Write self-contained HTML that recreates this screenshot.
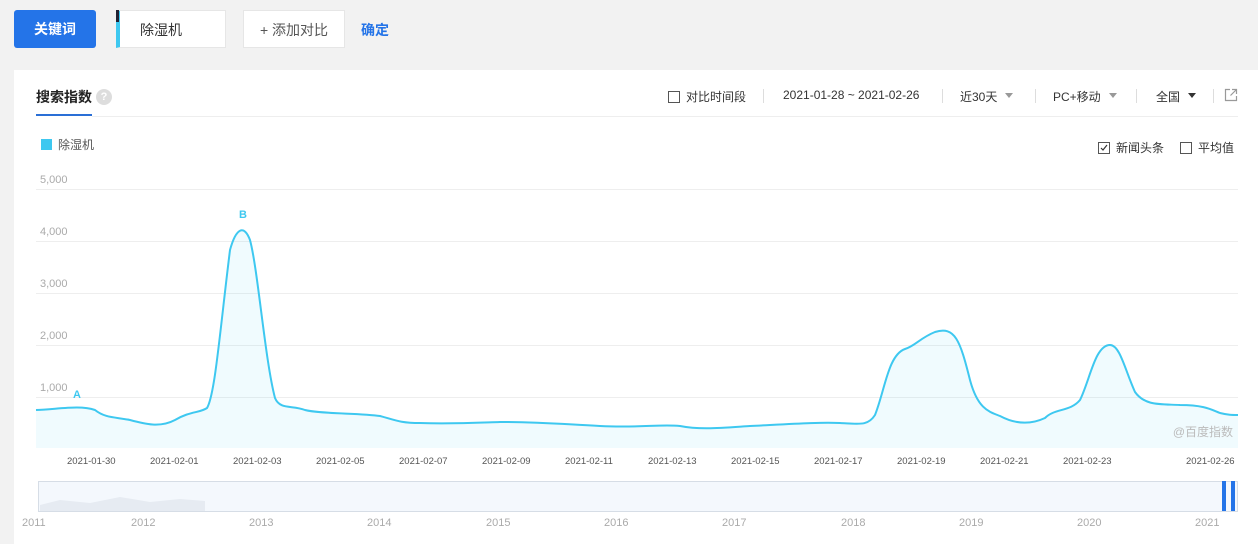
<!DOCTYPE html>
<html><head><meta charset="utf-8"><style>
body{margin:0;width:1258px;height:544px;background:#f2f2f2;font-family:"Liberation Sans","Noto Sans CJK SC",sans-serif;position:relative;overflow:hidden;color:#333}
.a{position:absolute}
.btn{top:10px;height:38px;box-sizing:border-box;font-size:14px;line-height:38px;text-align:center}
.card{left:14px;top:70px;width:1244px;height:474px;background:#fff}
.tb{font-size:12px;color:#333;top:88px}
.sep{width:1px;height:14px;background:#ddd;top:89px}
.tri{display:inline-block;border:4px solid transparent;border-top:5px solid #999;margin-left:8px;vertical-align:-1px}
.tri2{border-top-color:#333}
.cb{display:inline-block;width:10px;height:10px;border:1px solid #555;vertical-align:-2px;margin-right:6px}
.yl{font-size:11px;color:#aaa;left:40px}
.grid{left:36px;width:1202px;height:1px;background:#eee}
.xl{font-size:9.5px;color:#555;top:456px}
.yr{font-size:11px;color:#aaa;top:517px}
</style></head><body>
<div class="a btn" style="left:14px;width:82px;background:#2474e8;color:#fff;border-radius:3px;font-weight:bold">关键词</div>
<div class="a btn" style="left:116px;width:110px;background:#fff;border:1px solid #e6e6e6;border-left:4px solid #3ec8f0;text-align:left;padding-left:20px">除湿机</div>
<div class="a" style="left:116px;top:10px;width:3px;height:12px;background:#223"></div>
<div class="a btn" style="left:243px;width:102px;background:#fff;border:1px solid #e6e6e6;color:#555">+ 添加对比</div>
<div class="a" style="left:361px;top:20px;font-size:14px;color:#2474e8;font-weight:bold">确定</div>
<div class="a card"></div>
<div class="a" style="left:36px;top:87px;font-size:14px;font-weight:bold;color:#222">搜索指数</div>
<div class="a" style="left:96px;top:89px;width:16px;height:16px;border-radius:50%;background:#ddd;color:#fff;font-size:11px;text-align:center;line-height:16px;font-weight:bold">?</div>
<div class="a" style="left:36px;top:114px;width:56px;height:2px;background:#2a6fd6"></div>
<div class="a" style="left:92px;top:116px;width:1146px;height:1px;background:#eee"></div>
<div class="a tb" style="left:668px"><span class="cb"></span>对比时间段</div>
<div class="a sep" style="left:763px"></div>
<div class="a tb" style="left:783px">2021-01-28 ~ 2021-02-26</div>
<div class="a sep" style="left:942px"></div>
<div class="a tb" style="left:960px">近30天<span class="tri"></span></div>
<div class="a sep" style="left:1035px"></div>
<div class="a tb" style="left:1053px">PC+移动<span class="tri"></span></div>
<div class="a sep" style="left:1136px"></div>
<div class="a tb" style="left:1156px">全国<span class="tri tri2"></span></div>
<div class="a sep" style="left:1213px"></div>
<svg class="a" style="left:1224px;top:88px" width="14" height="14" viewBox="0 0 14 14"><path d="M6 1.5H1.5v11h11V8M8 1.5h4.5V6M12.5 1.5L6.5 7.5" fill="none" stroke="#999" stroke-width="1.2"/></svg>
<div class="a" style="left:41px;top:139px;width:11px;height:11px;background:#3ec8f0"></div>
<div class="a" style="left:58px;top:136px;font-size:12px;color:#555">除湿机</div>
<div class="a" style="left:1098px;top:139px;font-size:12px;color:#333"><span class="cb" style="position:relative"><svg style="position:absolute;left:0;top:0" width="10" height="10"><path d="M2 5l2 2 4-5" fill="none" stroke="#333" stroke-width="1.2"/></svg></span>新闻头条</div>
<div class="a" style="left:1180px;top:139px;font-size:12px;color:#333"><span class="cb"></span>平均值</div>
<div class="a grid" style="top:189px"></div><div class="a grid" style="top:241px"></div><div class="a grid" style="top:293px"></div><div class="a grid" style="top:345px"></div><div class="a grid" style="top:397px"></div>
<div class="a yl" style="top:174px">5,000</div><div class="a yl" style="top:226px">4,000</div><div class="a yl" style="top:278px">3,000</div><div class="a yl" style="top:330px">2,000</div><div class="a yl" style="top:382px">1,000</div>
<svg class="a" style="left:0;top:0" width="1258" height="544">
<path id="c" d="M36,410 C60,409 80,405 95,410 C105,418 115,417 130,420 C145,424 160,428 175,420 C190,411 200,413 207,408 C215,395 220,330 230,250 C236,228 244,224 250,240 C258,270 265,360 275,398 C280,410 292,405 305,410 C320,414 360,413 380,416 C395,420 400,423 420,423 C450,424 470,423 500,422 C540,422 560,424 600,426 C640,428 660,424 680,426 C700,430 720,428 750,426 C790,424 820,422 840,423 C860,424 868,426 875,415 C885,390 888,355 905,349 C915,346 920,338 935,332 C955,326 960,340 970,380 C978,410 990,412 1000,416 C1015,424 1030,425 1045,418 C1055,408 1070,412 1080,400 C1090,380 1095,345 1110,345 C1120,345 1125,370 1135,392 C1145,406 1160,404 1180,405 C1205,405 1212,410 1220,413 C1228,415 1232,415 1238,415" fill="none" stroke="#3ec8f0" stroke-width="2"/>
<path d="M36,410 C60,409 80,405 95,410 C105,418 115,417 130,420 C145,424 160,428 175,420 C190,411 200,413 207,408 C215,395 220,330 230,250 C236,228 244,224 250,240 C258,270 265,360 275,398 C280,410 292,405 305,410 C320,414 360,413 380,416 C395,420 400,423 420,423 C450,424 470,423 500,422 C540,422 560,424 600,426 C640,428 660,424 680,426 C700,430 720,428 750,426 C790,424 820,422 840,423 C860,424 868,426 875,415 C885,390 888,355 905,349 C915,346 920,338 935,332 C955,326 960,340 970,380 C978,410 990,412 1000,416 C1015,424 1030,425 1045,418 C1055,408 1070,412 1080,400 C1090,380 1095,345 1110,345 C1120,345 1125,370 1135,392 C1145,406 1160,404 1180,405 C1205,405 1212,410 1220,413 C1228,415 1232,415 1238,415 L1238,448 L36,448Z" fill="#3ec8f0" fill-opacity="0.08"/>
<text x="77" y="398" font-size="11" fill="#3ec8f0" font-weight="bold" text-anchor="middle" font-family="Liberation Sans">A</text>
<text x="243" y="218" font-size="11" fill="#3ec8f0" font-weight="bold" text-anchor="middle" font-family="Liberation Sans">B</text>
<text x="1233" y="436" font-size="12" fill="#bbb" text-anchor="end" font-family="Liberation Sans, Noto Sans CJK SC">@百度指数</text>
<rect x="38.5" y="481.5" width="1199" height="30" fill="#f4f8fd" stroke="#d6dde6"/>
<path d="M40,505 L60,500 L90,503 L120,497 L150,502 L180,499 L205,501 L205,511 L40,511Z" fill="#e6ebf2"/>
<rect x="1222" y="481" width="4" height="30" fill="#2474e8"/><rect x="1231" y="481" width="4" height="30" fill="#2474e8"/>
</svg>
<div class="a xl" style="left:67px">2021-01-30</div><div class="a xl" style="left:150px">2021-02-01</div><div class="a xl" style="left:233px">2021-02-03</div><div class="a xl" style="left:316px">2021-02-05</div><div class="a xl" style="left:399px">2021-02-07</div><div class="a xl" style="left:482px">2021-02-09</div><div class="a xl" style="left:565px">2021-02-11</div><div class="a xl" style="left:648px">2021-02-13</div><div class="a xl" style="left:731px">2021-02-15</div><div class="a xl" style="left:814px">2021-02-17</div><div class="a xl" style="left:897px">2021-02-19</div><div class="a xl" style="left:980px">2021-02-21</div><div class="a xl" style="left:1063px">2021-02-23</div><div class="a xl" style="left:1186px">2021-02-26</div>
<div class="a yr" style="left:22px">2011</div><div class="a yr" style="left:131px">2012</div><div class="a yr" style="left:249px">2013</div><div class="a yr" style="left:367px">2014</div><div class="a yr" style="left:486px">2015</div><div class="a yr" style="left:604px">2016</div><div class="a yr" style="left:722px">2017</div><div class="a yr" style="left:841px">2018</div><div class="a yr" style="left:959px">2019</div><div class="a yr" style="left:1077px">2020</div><div class="a yr" style="left:1195px">2021</div>
</body></html>
